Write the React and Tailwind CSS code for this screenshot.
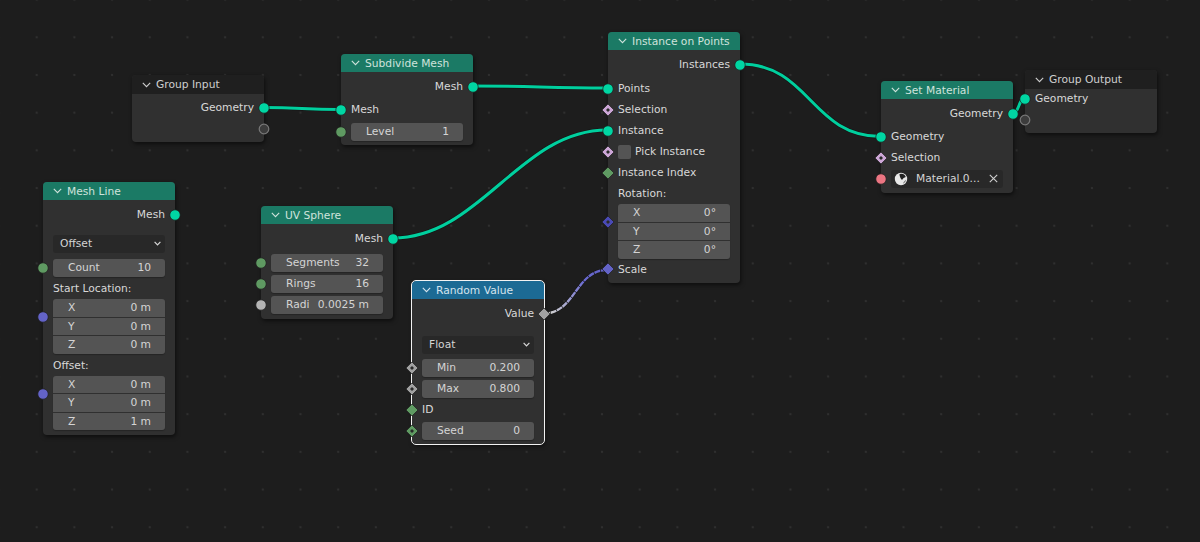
const GEO = "#00d6a3";
const INT = "#5f9a62";
const VEC = "#6363c7";
const FLT = "#a1a1a1";
const BOOL = "#cca6d6";
const MAT = "#eb7582";

function Socket({ side, color, diamond, dot, hollow }) {
  const pos = side === "right" ? "right-0 translate-x-1/2" : "left-0 -translate-x-1/2";
  return (
    <svg width="14" height="14" viewBox="0 0 14 14" className={`absolute top-1/2 -translate-y-1/2 ${pos}`}>
      {diamond ? (
        <path d="M7 1 L13 7 L7 13 L1 7 Z" fill={color} stroke="#1c1c1c" strokeWidth="0.7" />
      ) : hollow ? (
        <circle cx="7" cy="7" r="4.8" fill="#3c3c3c" stroke="#787878" strokeWidth="1.2" />
      ) : (
        <circle cx="7" cy="7" r="5.2" fill={color} stroke="#1c1c1c" strokeWidth="0.7" />
      )}
      {dot && <path d="M7 5 L9 7 L7 9 L5 7 Z" fill="#2a2a2a" />}
    </svg>
  );
}

function Node({ x, y, w = 132, title, head = "bg-[#1b7a65]", headText = "text-[#cfe3dc]", headH = "h-[18px]", pb = "pb-[3px]", sel, children }) {
  return (
    <div
      className={`absolute rounded-[4px] bg-[#303030] shadow-[1px_2px_4px_rgba(0,0,0,0.55)] ${sel ? "outline outline-1 outline-[#f2f2f2]" : ""}`}
      style={{ left: x, top: y, width: w }}
    >
      <div className={`flex items-center gap-[5px] whitespace-nowrap rounded-t-[4px] pl-[10px] ${headH} ${head} ${headText}`}>
        <svg width="9" height="6" viewBox="0 0 9 6" fill="none" stroke="currentColor" strokeWidth="1.1">
          <path d="M0.8 0.8 L4.5 4.6 L8.2 0.8" />
        </svg>
        <span>{title}</span>
      </div>
      <div className={`flex flex-col ${pb}`}>{children}</div>
    </div>
  );
}

function Row({ children, right, socket, mt = "" }) {
  return (
    <div className={`relative flex h-[21px] items-center px-[10px] ${right ? "justify-end" : ""} ${mt}`}>
      {socket && <Socket {...socket} side={right ? "right" : "left"} />}
      {children}
    </div>
  );
}

function Field({ label, value, socket, mt = "" }) {
  return (
    <div className={`relative flex h-[21px] items-center px-[10px] ${mt}`}>
      {socket && <Socket {...socket} side="left" />}
      <div className="flex h-[18px] w-full items-center justify-between rounded-[3px] bg-[#545454] pl-[15px] pr-[14px] text-[#d4d4d4] shadow-[0_1px_1px_rgba(0,0,0,0.25)]">
        <span>{label}</span>
        <span>{value}</span>
      </div>
    </div>
  );
}

function Select({ label, mt = "" }) {
  return (
    <div className={`flex h-[19px] items-center px-[10px] ${mt}`}>
      <div className="flex h-[18px] w-full items-center justify-between rounded-[3px] bg-[#282828] pl-[7px] pr-[4px] text-[#d4d4d4]">
        <span>{label}</span>
        <svg width="7" height="5" viewBox="0 0 7 5" fill="none" stroke="#d8d8d8" strokeWidth="1.2">
          <path d="M0.6 0.8 L3.5 3.8 L6.4 0.8" />
        </svg>
      </div>
    </div>
  );
}

function Vector({ rows, socket, mt = "" }) {
  return (
    <div className={`relative px-[10px] ${mt}`}>
      {socket && (
        <div className="absolute left-0 top-0 h-[36px] w-0">
          <Socket {...socket} side="left" />
        </div>
      )}
      <div className="flex flex-col gap-[1px] overflow-hidden rounded-[3px] shadow-[0_1px_1px_rgba(0,0,0,0.25)]">
        {rows.map(([l, v]) => (
          <div key={l} className="flex h-[17.5px] items-center justify-between bg-[#545454] pl-[15px] pr-[14px] text-[#d4d4d4]">
            <span>{l}</span>
            <span>{v}</span>
          </div>
        ))}
      </div>
    </div>
  );
}

function Wire({ d, color = "#00cf9e", w = 3 }) {
  return (
    <>
      <path d={d} fill="none" stroke="#141414" strokeWidth={w + 1.2} strokeLinecap="round" />
      <path d={d} fill="none" stroke={color} strokeWidth={w} strokeLinecap="round" />
    </>
  );
}

export default function App() {
  return (
    <div
      className="relative h-[542px] w-[1200px] overflow-hidden bg-[#1d1d1d] bg-[radial-gradient(circle,#2f2f2f_1px,transparent_1.6px)] bg-[size:37.7px_37.7px] bg-[position:17.85px_18.45px] text-[10.7px] leading-[13px] text-[#d8d8d8]"
      style={{ fontFamily: '"DejaVu Sans", sans-serif' }}
    >
      <svg width="1200" height="542" className="absolute left-0 top-0">
        <defs>
          <linearGradient id="rv" gradientUnits="userSpaceOnUse" x1="550" y1="313" x2="600" y2="270">
            <stop offset="0" stopColor="#d0d0d0" />
            <stop offset="0.7" stopColor="#6a6ad0" />
            <stop offset="1" stopColor="#6363c7" />
          </linearGradient>
        </defs>
        <Wire d="M264 107.5 C300 107.5 304 109.5 340 109.5" />
        <Wire d="M473 86 C530 86 550 88 607 88" />
        <Wire d="M393 238 C480 238 520 130 607 130" />
        <Wire d="M740 64 C810 64 811 136.5 881 136.5" />
        <Wire d="M1013 113 C1019 113 1019 98 1025 98" />
        <path d="M544 313.5 C575 313.5 576 270 607 270" fill="none" stroke="#141414" strokeWidth="3.4" />
        <path d="M544 313.5 C575 313.5 576 270 607 270" fill="none" stroke="url(#rv)" strokeWidth="2.4" strokeDasharray="6 0.7" />
      </svg>

      <Node x={132} y={75} title="Group Input" head="bg-[#1f1f1f]" headText="text-[#cfcfcf]" headH="h-[19px]">
        <div className="h-[3px]" />
        <Row right socket={{ color: GEO }}>Geometry</Row>
        <Row right socket={{ hollow: true }} />
      </Node>

      <Node x={341} y={54} title="Subdivide Mesh">
        <div className="h-[4px]" />
        <Row right socket={{ color: GEO }}>Mesh</Row>
        <Row mt="mt-[2px]" socket={{ color: GEO }}>Mesh</Row>
        <Field label="Level" value="1" socket={{ color: INT }} mt="mt-[1px]" />
      </Node>

      <Node x={43} y={182} title="Mesh Line" pb="pb-[5px]">
        <div className="h-[4px]" />
        <Row right socket={{ color: GEO }}>Mesh</Row>
        <Select label="Offset" mt="mt-[9px]" />
        <Field label="Count" value="10" socket={{ color: INT }} mt="mt-[4px]" />
        <Row>Start Location:</Row>
        <Vector rows={[["X", "0 m"], ["Y", "0 m"], ["Z", "0 m"]]} socket={{ color: VEC }} />
        <Row mt="mt-[1px]">Offset:</Row>
        <Vector rows={[["X", "0 m"], ["Y", "0 m"], ["Z", "1 m"]]} socket={{ color: VEC }} />
      </Node>

      <Node x={261} y={206} title="UV Sphere" pb="pb-[4px]">
        <div className="h-[4px]" />
        <Row right socket={{ color: GEO }}>Mesh</Row>
        <Field label="Segments" value="32" socket={{ color: INT }} mt="mt-[3px]" />
        <Field label="Rings" value="16" socket={{ color: INT }} />
        <Field label="Radi" value="0.0025 m" socket={{ color: "#b4b4b4" }} />
      </Node>

      <Node x={412} y={281} title="Random Value" head="bg-[#1c6a94]" headText="text-[#d5e4ee]" sel>
        <div className="h-[4px]" />
        <Row right socket={{ color: FLT, diamond: true }}>Value</Row>
        <Select label="Float" mt="mt-[11px]" />
        <Field label="Min" value="0.200" socket={{ color: FLT, diamond: true, dot: true }} mt="mt-[3px]" />
        <Field label="Max" value="0.800" socket={{ color: FLT, diamond: true, dot: true }} />
        <Row socket={{ color: INT, diamond: true }}>ID</Row>
        <Field label="Seed" value="0" socket={{ color: INT, diamond: true, dot: true }} />
      </Node>

      <Node x={608} y={32} title="Instance on Points">
        <div className="h-[4px]" />
        <Row right socket={{ color: GEO }}>Instances</Row>
        <Row mt="mt-[3px]" socket={{ color: GEO }}>Points</Row>
        <Row socket={{ color: BOOL, diamond: true, dot: true }}>Selection</Row>
        <Row socket={{ color: GEO }}>Instance</Row>
        <Row socket={{ color: BOOL, diamond: true, dot: true }}>
          <span className="mr-[4px] h-[14px] w-[13px] rounded-[2px] bg-[#545454]" />
          Pick Instance
        </Row>
        <Row socket={{ color: INT, diamond: true }}>Instance Index</Row>
        <Row>Rotation:</Row>
        <Vector rows={[["X", "0°"], ["Y", "0°"], ["Z", "0°"]]} socket={{ color: "#4a4ab5", diamond: true, dot: true }} />
        <Row socket={{ color: VEC, diamond: true }}>Scale</Row>
      </Node>

      <Node x={881} y={81} title="Set Material" pb="pb-[4px]">
        <div className="h-[4px]" />
        <Row right socket={{ color: GEO }}>Geometry</Row>
        <Row mt="mt-[2px]" socket={{ color: GEO }}>Geometry</Row>
        <Row socket={{ color: BOOL, diamond: true, dot: true }}>Selection</Row>
        <Row socket={{ color: MAT }}>
          <div className="flex h-[18px] w-full items-center rounded-[3px] bg-[#282828] pl-[3px] pr-[5px] text-[#d4d4d4]">
            <svg width="14" height="14" viewBox="0 0 14 14" className="mr-[8px] shrink-0">
              <circle cx="7" cy="7" r="6.2" fill="#e8e8e8" />
              <path d="M5.5 2 A5.2 5.2 0 0 1 11.8 5 C10.2 5.4 9 6.4 8 8 C6.4 6.6 5.5 4.4 5.5 2 Z" fill="#222" />
              <path d="M12.2 7.5 A5.2 5.2 0 0 1 9 11.8 C9.4 10.2 10.6 8.6 12.2 7.5 Z" fill="#777" />
            </svg>
            <span>Material.0...</span>
            <svg width="9" height="9" viewBox="0 0 9 9" stroke="#cfcfcf" strokeWidth="1.1" className="ml-auto shrink-0">
              <path d="M.8 .8 L8.2 8.2 M8.2 .8 L.8 8.2" />
            </svg>
          </div>
        </Row>
      </Node>

      <Node x={1025} y={70} title="Group Output" head="bg-[#1f1f1f]" headText="text-[#cfcfcf]" headH="h-[19px]">
        <Row mt="-mt-[1px]" socket={{ color: GEO }}>Geometry</Row>
        <Row socket={{ hollow: true }} />
      </Node>
    </div>
  );
}
